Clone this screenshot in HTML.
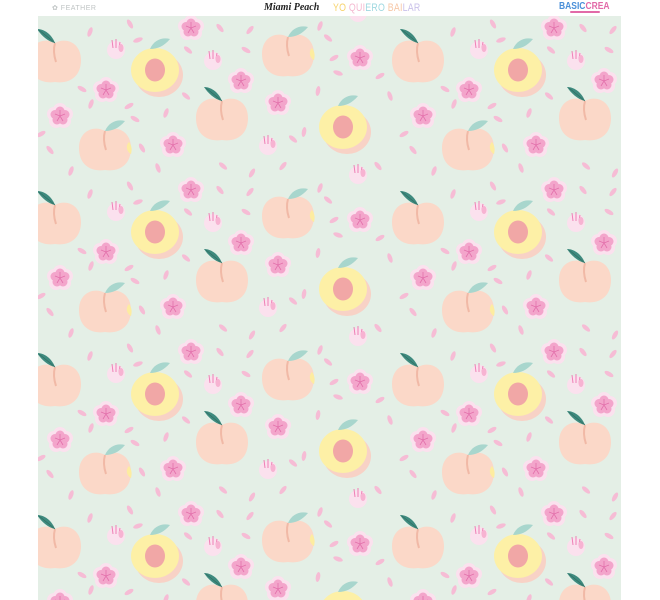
<!DOCTYPE html>
<html><head><meta charset="utf-8"><style>
html,body{margin:0;padding:0;background:#fff;width:660px;height:600px;overflow:hidden;position:relative;font-family:"Liberation Sans",sans-serif}
.h{position:absolute;top:2px;font-size:10px;white-space:nowrap}
</style></head><body>
<div class="h" style="left:52px;top:4px;font-size:7px;color:#bfc4c4;letter-spacing:.5px">✿ FEATHER</div>
<div class="h" style="left:264px;font-family:'Liberation Serif',serif;font-style:italic;font-weight:bold;font-size:10px;color:#222">Miami Peach</div>
<div class="h" style="left:333px;top:2px;font-size:11px;letter-spacing:.3px;transform:scaleX(.8);transform-origin:left"><span style="color:#f7d36b">YO</span> <span style="color:#f4b8d0">QUI</span><span style="color:#9fd8e0">ERO</span> <span style="color:#f7c7a6">BAI</span><span style="color:#c9c0ea">LAR</span></div>
<div class="h" style="left:559px;top:1px;font-size:10px;font-weight:bold;color:#4a8fd8;transform:scaleX(.85);transform-origin:left">BASIC<span style="color:#e26aa8">CREA</span></div>
<div style="position:absolute;left:570px;top:11px;width:30px;height:2px;background:#e26aa8;border-radius:1px"></div>
<svg style="position:absolute;left:38px;top:16px" width="583" height="584" viewBox="0 0 583 584">
<defs>
<g id="petal"><ellipse rx="2.2" ry="5" fill="#f6bcd5"/></g>
<g id="leafD"><path d="M0 0 C-4-10 -12-14 -18-14 C-14-8 -8-2 0 0Z" fill="#3e8a7e"/><path d="M0 0 L-16-13" stroke="#2d6b60" stroke-width=".6"/></g>
<g id="leafL"><path d="M0 0 C4-9 12-12 20-10 C14-3 8 0 0 0Z" fill="#a8d6cd"/></g>
<path id="pb" d="M0-17 C10-23 26-18 26 0 C26 17 14 24 0 22 C-14 24 -26 17 -26 0 C-26-18 -10-23 0-17Z" fill="#fbd8c8"/>
<g id="peachD"><use href="#pb"/><path d="M0-17 C-2-10 -1-4 1 2" stroke="#f1b9a6" stroke-width="2" fill="none"/><use href="#leafD" transform="translate(0,-17)"/></g>
<g id="peachB"><use href="#pb"/><path d="M24-6 C20-2 22 4 26 6 C27 2 27-2 24-6Z" fill="#fdeca0"/><path d="M0-17 C-2-10 -1-4 1 2" stroke="#f1b9a6" stroke-width="2" fill="none"/><use href="#leafL" transform="translate(0,-17)"/></g>
<g id="half"><ellipse cx="4" cy="5" rx="24" ry="22" fill="#f8d2c6"/><ellipse cx="0" cy="0" rx="24" ry="22" fill="#fdf0a6"/><ellipse cx="0" cy="0" rx="10" ry="11.5" fill="#f1a7a6"/><use href="#leafL" transform="translate(-5,-21)"/></g>
<g id="fl"><g fill="#fbe1ee"><circle cx="0" cy="-6" r="7"/><circle cx="6" cy="-2" r="7"/><circle cx="4" cy="5" r="7"/><circle cx="-4" cy="5" r="7"/><circle cx="-6" cy="-2" r="7"/></g><g fill="#f3a5cb"><circle cx="0" cy="-5" r="4.5"/><circle cx="5" cy="-1.5" r="4.5"/><circle cx="3" cy="4" r="4.5"/><circle cx="-3" cy="4" r="4.5"/><circle cx="-5" cy="-1.5" r="4.5"/></g><path d="M0 0 L0-6 M0 0 L5-2 M0 0 L3 5 M0 0 L-3 5 M0 0 L-5-2" stroke="#e36fab" stroke-width=".8"/></g>
<g id="bud"><circle cx="0" cy="2" r="9" fill="#fbe1ee"/><path d="M-3 0 L-4-8 M0 0 L0-9 M3 0 L4-6" stroke="#ef7fb6" stroke-width="1"/><ellipse cx="5" cy="0" rx="2.5" ry="4" fill="#f7b3d2"/></g>
<g id="t">
<use href="#peachD" x="17" y="44"/><use href="#half" x="117" y="54"/><use href="#peachB" x="250" y="38"/>
<use href="#peachB" x="67" y="132"/><use href="#peachD" x="184" y="102"/><use href="#half" x="305" y="111"/>
<use href="#fl" x="153" y="12"/><use href="#fl" x="203" y="65"/><use href="#fl" x="68" y="74"/>
<use href="#fl" x="22" y="100"/><use href="#fl" x="135" y="129"/><use href="#fl" x="240" y="87"/><use href="#fl" x="322" y="42"/>
<use href="#bud" x="78" y="32"/><use href="#bud" x="175" y="43"/><use href="#bud" x="230" y="128"/><use href="#bud" x="320" y="157"/>
<use href="#petal" transform="translate(52,16) rotate(20)"/><use href="#petal" transform="translate(92,8) rotate(-30)"/><use href="#petal" transform="translate(100,24) rotate(70)"/><use href="#petal" transform="translate(150,34) rotate(-50)"/><use href="#petal" transform="translate(182,12) rotate(-40)"/><use href="#petal" transform="translate(212,14) rotate(40)"/><use href="#petal" transform="translate(208,34) rotate(-60)"/><use href="#petal" transform="translate(282,10) rotate(20)"/><use href="#petal" transform="translate(290,22) rotate(-50)"/><use href="#petal" transform="translate(296,42) rotate(60)"/><use href="#petal" transform="translate(300,57) rotate(-70)"/><use href="#petal" transform="translate(280,75) rotate(10)"/><use href="#petal" transform="translate(44,73) rotate(-60)"/><use href="#petal" transform="translate(53,88) rotate(20)"/><use href="#petal" transform="translate(91,90) rotate(60)"/><use href="#petal" transform="translate(97,103) rotate(-60)"/><use href="#petal" transform="translate(128,97) rotate(20)"/><use href="#petal" transform="translate(148,80) rotate(-50)"/><use href="#petal" transform="translate(12,134) rotate(-40)"/><use href="#petal" transform="translate(3,118) rotate(60)"/><use href="#petal" transform="translate(104,132) rotate(-30)"/><use href="#petal" transform="translate(120,152) rotate(-20)"/><use href="#petal" transform="translate(33,155) rotate(20)"/><use href="#petal" transform="translate(185,150) rotate(-50)"/><use href="#petal" transform="translate(214,157) rotate(30)"/><use href="#petal" transform="translate(255,123) rotate(-50)"/><use href="#petal" transform="translate(266,116) rotate(10)"/><use href="#petal" transform="translate(245,150) rotate(40)"/><use href="#petal" transform="translate(342,60) rotate(60)"/><use href="#petal" transform="translate(352,80) rotate(-20)"/><use href="#petal" transform="translate(340,150) rotate(-40)"/>
</g>
<pattern id="p" width="363" height="162" patternUnits="userSpaceOnUse">
<rect width="363" height="162" fill="#e4efe6"/>
<use href="#t" x="-363" y="-162"/><use href="#t" x="0" y="-162"/><use href="#t" x="363" y="-162"/>
<use href="#t" x="-363" y="0"/><use href="#t" x="0" y="0"/><use href="#t" x="363" y="0"/>
<use href="#t" x="-363" y="162"/><use href="#t" x="0" y="162"/><use href="#t" x="363" y="162"/>
</pattern>
</defs>
<rect width="583" height="584" fill="url(#p)"/>
</svg>
</body></html>
